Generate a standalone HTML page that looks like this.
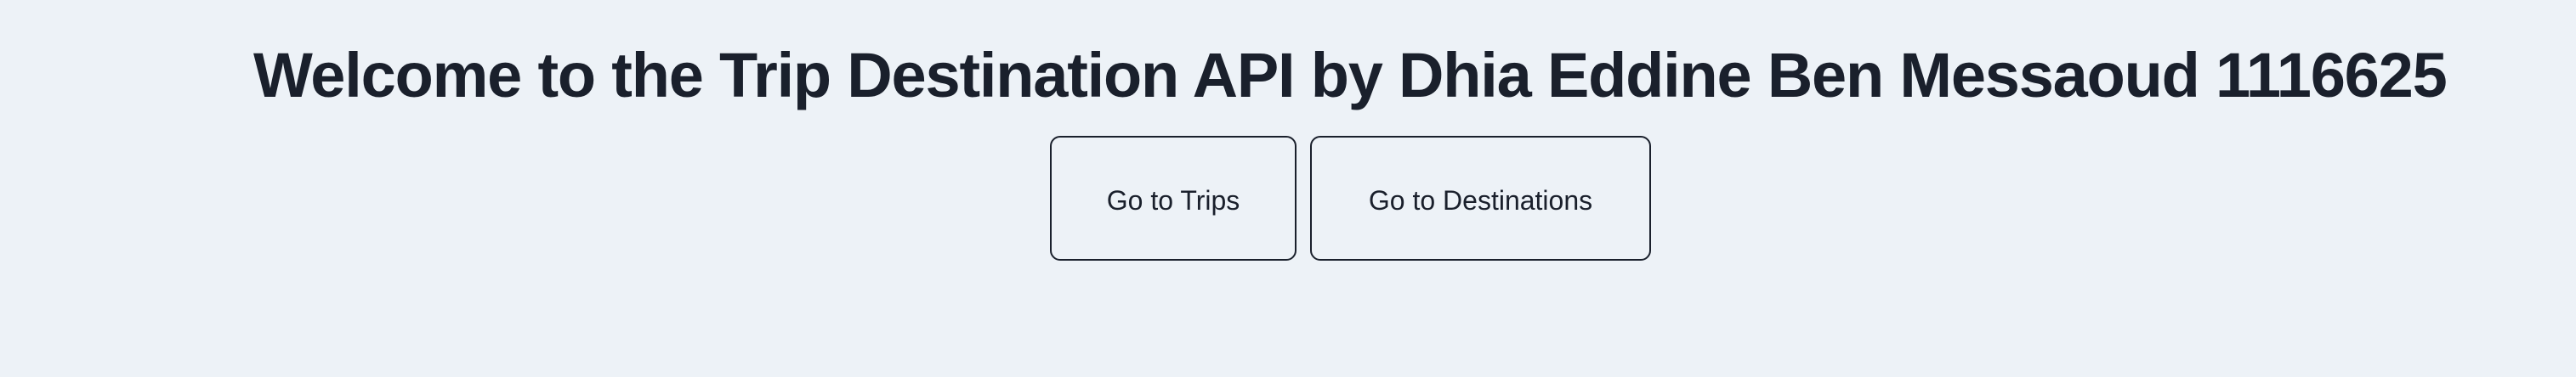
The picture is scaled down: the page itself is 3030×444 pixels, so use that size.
<!DOCTYPE html>
<html><head><meta charset="utf-8"><style>
html,body{margin:0;padding:0;}
body{width:3030px;height:444px;background:#edf2f7;position:relative;overflow:hidden;font-family:"Liberation Sans",sans-serif;color:#1a202c;}
h1{position:absolute;left:298px;top:44px;margin:0;font-size:74px;font-weight:bold;line-height:90px;white-space:nowrap;letter-spacing:-1.2px;}
.b{position:absolute;top:160px;height:147px;box-sizing:border-box;border:2px solid #1a202c;border-radius:12px;display:flex;align-items:center;justify-content:center;font-size:32px;color:#1a202c;padding-top:6px;}
</style></head><body>
<h1>Welcome to the Trip Destination API by Dhia Eddine Ben Messaoud 1116625</h1>
<div class="b" style="left:1235px;width:290px;">Go to Trips</div>
<div class="b" style="left:1541px;width:401px;">Go to Destinations</div>
</body></html>
